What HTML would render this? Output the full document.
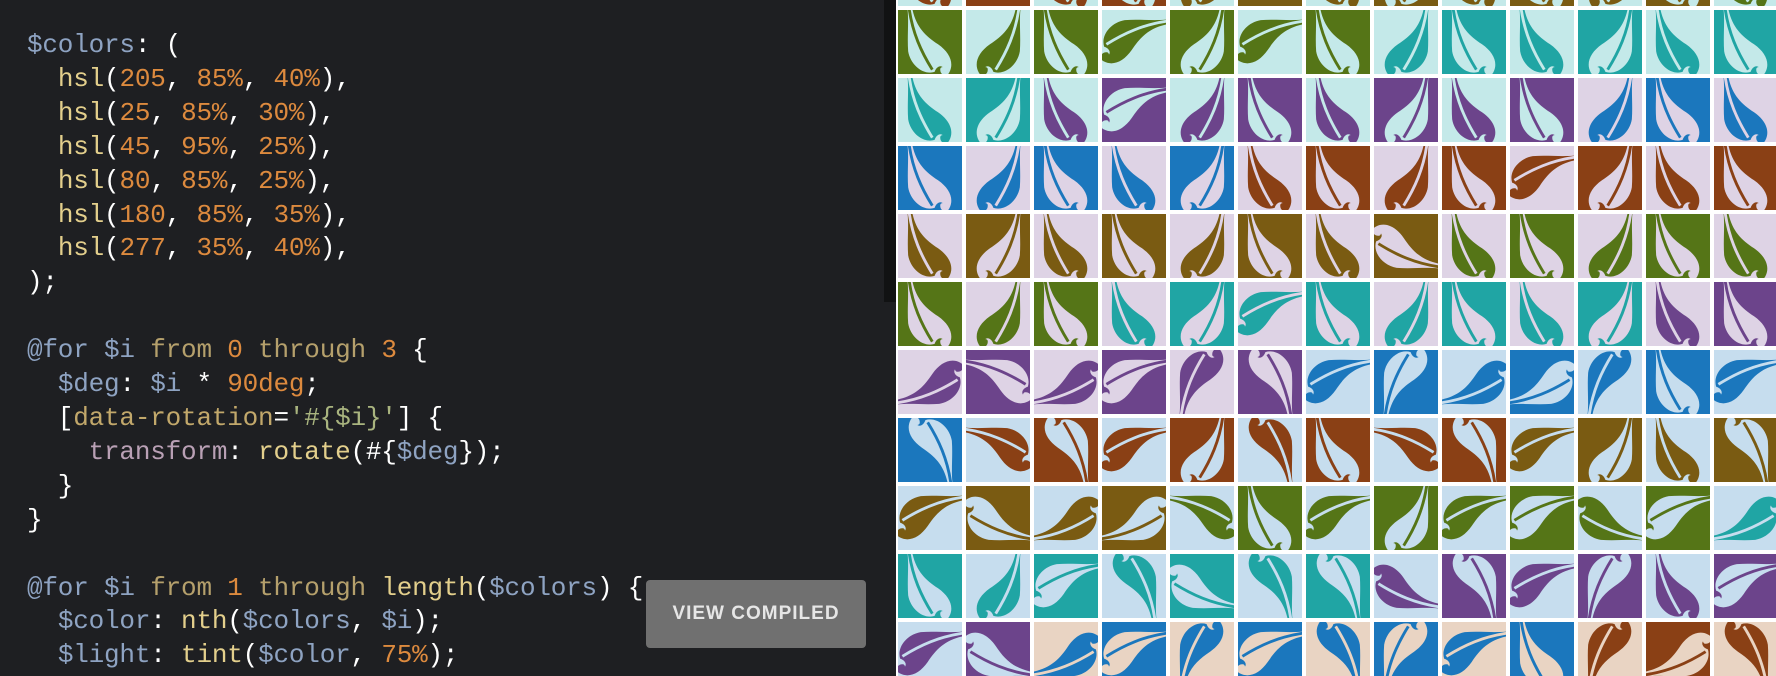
<!DOCTYPE html>
<html><head><meta charset="utf-8">
<style>
html,body{margin:0;padding:0;width:1776px;height:676px;overflow:hidden;background:#fff}
#code{position:absolute;left:0;top:0;width:896px;height:676px;background:#1e1f22}
#sb{position:absolute;left:884px;top:0;width:12px;height:302px;background:#111213}
pre{margin:0;position:absolute;left:27px;top:29px;font-family:"Liberation Mono",monospace;font-size:26px;line-height:33.9px;color:#fff;letter-spacing:-0.2px}
.v{color:#8ea3c2}.f{color:#e3cf8c}.n{color:#dd8a3e}.k{color:#b5a06c}.p{color:#b9a0b5}.a{color:#c2a86b}.s{color:#a9b47f}
#btn{position:absolute;left:646px;top:580px;width:220px;height:68px;background:#707070;border-radius:4px;color:#e6e6e6;font-family:"Liberation Sans",sans-serif;font-weight:bold;font-size:19px;letter-spacing:1px;text-align:center;line-height:68px}
#tiles{position:absolute;left:896px;top:0}
</style></head><body>
<div id="code">
<pre><span class="v">$colors</span>: (
  <span class="f">hsl</span>(<span class="n">205</span>, <span class="n">85%</span>, <span class="n">40%</span>),
  <span class="f">hsl</span>(<span class="n">25</span>, <span class="n">85%</span>, <span class="n">30%</span>),
  <span class="f">hsl</span>(<span class="n">45</span>, <span class="n">95%</span>, <span class="n">25%</span>),
  <span class="f">hsl</span>(<span class="n">80</span>, <span class="n">85%</span>, <span class="n">25%</span>),
  <span class="f">hsl</span>(<span class="n">180</span>, <span class="n">85%</span>, <span class="n">35%</span>),
  <span class="f">hsl</span>(<span class="n">277</span>, <span class="n">35%</span>, <span class="n">40%</span>),
);

<span class="v">@for $i</span> <span class="k">from</span> <span class="n">0</span> <span class="k">through</span> <span class="n">3</span> {
  <span class="v">$deg</span>: <span class="v">$i</span> * <span class="n">90deg</span>;
  [<span class="a">data-rotation</span>=<span class="s">'#{$i}'</span>] {
    <span class="p">transform</span>: <span class="f">rotate</span>(#{<span class="v">$deg</span>});
  }
}

<span class="v">@for $i</span> <span class="k">from</span> <span class="n">1</span> <span class="k">through</span> <span class="f">length</span>(<span class="v">$colors</span>) {
  <span class="v">$color</span>: <span class="f">nth</span>(<span class="v">$colors</span>, <span class="v">$i</span>);
  <span class="v">$light</span>: <span class="f">tint</span>(<span class="v">$color</span>, <span class="n">75%</span>);</pre>
<div id="sb"></div>
<div id="btn">VIEW COMPILED</div>
</div>
<svg id="tiles" width="880" height="676" xmlns="http://www.w3.org/2000/svg"></svg>
<script>
var D={b:'#1b77bd',r:'#8a4015',o:'#7a5b12',g:'#557517',t:'#20a5a4',p:'#6c448b'};
var L={c:'#c4e9e9',l:'#ded3e5',b:'#c6ddee',e:'#e9d4c3'};
var rows=[
"rc Rc rc Rc oc Oc oc Oc oc Oc oc Oc gc",
"Gc gc Gc gc Gc gc Gc tc Tc tc Tc tc Tc",
"tc Tc pc Pc pc Pc pc Pc pc Pc bl Bl bl",
"Bl bl Bl bl Bl rl Rl rl Rl rl Rl rl Rl",
"ol Ol ol Ol ol Ol ol Ol gl Gl gl Gl gl",
"Gl gl Gl tl Tl tl Tl tl Tl tl Tl pl Pl",
"pl Pl pl Pl pl Pl bb Bb bb Bb bb Bb bb",
"Bb rb Rb rb Rb rb Rb rb Rb ob Ob ob Ob",
"ob Ob ob Ob gb Gb gb Gb gb Gb gb Gb tb",
"Tb tb Tb tb Tb tb Tb pb Pb pb Pb pb Pb",
"pb Pb be Be be Be be Be be Be re Re re"];
var leaf="M12 0 L16 0 C19 18 27 26 39 34 C49 41 53 50 49 58 C47 63 40 61 41 55 C43 52 47 55 45 58 C44 51 38 52 36 58 C26 61 15 52 13 40 C12 26 14 12 12 0 Z";
var h='<defs><clipPath id="cp"><rect width="64" height="64"/></clipPath></defs>';var seed=7;
function rnd(){seed=(seed*9301+49297)%233280;return seed/233280;}
for(var r=0;r<rows.length;r++){
 var tk=rows[r].split(' ');var y=-58+r*68;
 for(var c=0;c<tk.length;c++){
  var x=2+c*68,t=tk[c],dk=D[t[0].toLowerCase()],lt=L[t[1]];
  var dark=t[0]===t[0].toUpperCase();
  var bg=dark?dk:lt,fg=dark?lt:dk;
  var rot=(r<6)?[0,0,90,0][Math.floor(rnd()*4)]*((c%2)?1:0):[90,180,270,0][Math.floor(rnd()*4)];
  var flip=(c%3==1)?' scale(-1,1) translate(-64,0)':'';
  h+='<g transform="translate('+x+','+y+')" clip-path="url(#cp)"><rect width="64" height="64" fill="'+bg+'"/><g transform="rotate('+rot+',32,32)'+flip+' translate(32,32) scale(1.15) translate(-32,-32)"><path d="'+leaf+'" fill="'+fg+'"/><path d="M14 4 C17 24 24 40 34 56" stroke="'+bg+'" stroke-width="2.5" fill="none"/></g></g>';
 }
}
document.getElementById('tiles').innerHTML=h;
</script>
</body></html>
